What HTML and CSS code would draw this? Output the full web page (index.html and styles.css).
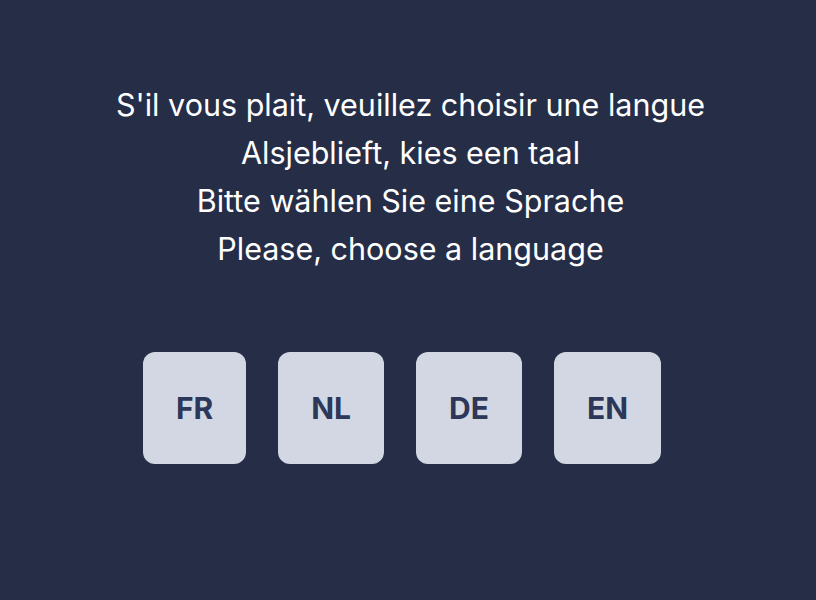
FILE: index.html
```html
<!DOCTYPE html>
<html>
<head>
<meta charset="utf-8">
<link rel="stylesheet" href="styles.css">
</head>
<body>
<main class="screen">
  <div class="prompts">
    <p>S'il vous plait, veuillez choisir une langue</p>
    <p>Alsjeblieft, kies een taal</p>
    <p>Bitte wählen Sie eine Sprache</p>
    <p>Please, choose a language</p>
  </div>
  <div class="langs">
    <button class="lang">FR</button>
    <button class="lang">NL</button>
    <button class="lang">DE</button>
    <button class="lang">EN</button>
  </div>
</main>
</body>
</html>
```
FILE: styles.css
```css
html, body {
  margin: 0;
  padding: 0;
  background: #252d47;
}
.screen {
  width: 816px;
  height: 600px;
  box-sizing: border-box;
  padding-top: 81px;
  display: flex;
  flex-direction: column;
  align-items: center;
  font-family: Inter, "Liberation Sans", sans-serif;
}
.prompts {
  text-align: center;
  color: #ffffff;
  font-size: 30.5px;
  line-height: 48px;
  padding-left: 5px;
}
.prompts p {
  margin: 0;
}
.langs {
  margin-top: 79px;
  display: flex;
  gap: 32px;
  padding-right: 12px;
}
.lang {
  border: none;
  background: #d3d7e3;
  color: #2c3759;
  font-family: Inter, "Liberation Sans", sans-serif;
  font-weight: 700;
  font-size: 30px;
  line-height: 40px;
  padding: 36px 33px;
  border-radius: 12px;
}
```
